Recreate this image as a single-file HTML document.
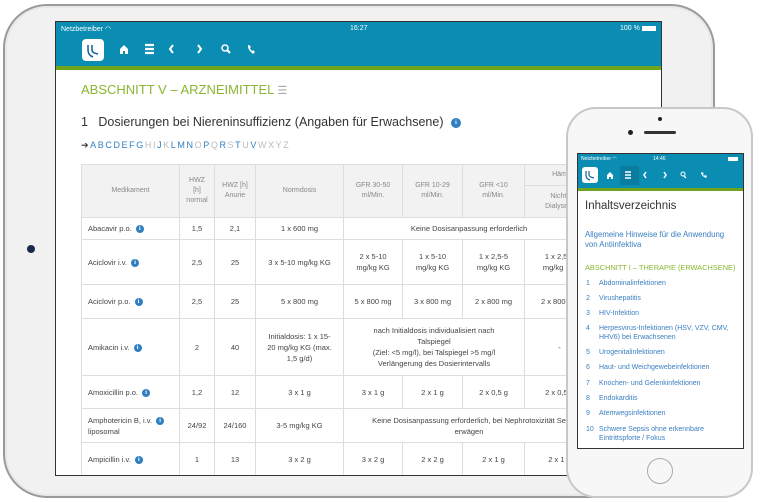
<!DOCTYPE html>
<html><head><meta charset="utf-8"><style>
*{margin:0;padding:0;box-sizing:border-box}
body{width:760px;height:502px;background:#fff;position:relative;overflow:hidden;font-family:"Liberation Sans",sans-serif}
.abs{position:absolute}
.ipad{left:3px;top:4px;width:712px;height:494px;border-radius:44px;background:#f1f1f1;border:2px solid #9a9a9a;box-shadow:inset 0 0 0 2px #e8e8e8}
.scr{left:55px;top:21px;width:607px;height:455px;background:#fff;border:1px solid #333;overflow:hidden}
.bar{left:0;top:0;width:100%;height:44px;background:#0b8db3}
.green{left:0;top:44px;width:100%;height:4px;background:#6fa41c}
.st{color:#fff;font-size:7px}
.logo{background:#fff;border-radius:4px}
table{border-collapse:collapse;font-size:7.5px;color:#444;position:absolute;left:25px;top:142px}
td{border:1px solid #ddd;text-align:center;vertical-align:middle;line-height:11px}
th{border:1px solid #ddd;background:#f2f2f2;font-weight:normal;color:#888;font-size:7px;line-height:10px;vertical-align:middle}
td.l{text-align:left;padding-left:6px}
.i{display:inline-block;width:8px;height:8px;border-radius:50%;background:#2f7fc1;color:#fff;font-size:6px;line-height:8px;text-align:center;font-weight:bold;margin-left:4px;vertical-align:middle;font-family:"Liberation Serif",serif}
.phone{left:566px;top:107px;width:187px;height:391px;border-radius:30px;background:#f7f7f7;border:2px solid #c8c8c8}
.pscr{left:577px;top:153px;width:167px;height:296px;background:#fff;border:1px solid #333;overflow:hidden}
.toc{font-size:7px;color:#3a7fc0;line-height:9px}
.toc div{position:absolute;left:8px;white-space:nowrap}
.toc span{display:inline-block;width:13px;color:#3a7fc0}
</style></head><body>
<div class="abs ipad"></div>
<div class="abs" style="left:27px;top:245px;width:8px;height:8px;border-radius:50%;background:#1a2a4a"></div>
<div class="abs scr">
 <div class="abs bar"></div>
 <div class="abs st" style="left:5px;top:3px">Netzbetreiber ◠</div>
 <div class="abs st" style="left:294px;top:3px">16:27</div>
 <div class="abs st" style="left:564px;top:3px">100 % <span style="display:inline-block;width:14px;height:5px;background:#fff;vertical-align:middle"></span></div>
 <div class="abs logo" style="left:26px;top:17px;width:22px;height:22px"><svg width="22" height="22"><path d="M6 6v5q0 5 5 7M10 6v5q0 3 6 4" stroke="#0b5f98" stroke-width="1.5" fill="none"/></svg></div>
 <svg class="abs" style="left:60px;top:20px" width="150" height="14" fill="#fff" stroke="#fff">
  <path d="M4 7l4-4 4 4v5h-3v-3h-2v3h-3z" stroke="none"/>
  <path d="M29 3h9M29 7h9M29 11h9" stroke-width="2.2" fill="none"/>
  <path d="M57 3l-3 4 3 4" stroke-width="2" fill="none"/>
  <path d="M82 3l3 4-3 4" stroke-width="2" fill="none"/>
  <circle cx="109" cy="6" r="3" fill="none" stroke-width="1.5"/><path d="M111 8l3 3" stroke-width="2"/>
  <path d="M132 3q-1 4 5 9l2-2-2-2-1 1q-2-2-2-3l1-1-2-2z" stroke="none"/>
 </svg>
 <div class="abs green"></div>
 <div class="abs" style="left:25px;top:60px;font-size:13px;color:#8bb532">ABSCHNITT V – ARZNEIMITTEL <span style="color:#aaa;font-size:11px">☰</span></div>
 <div class="abs" style="left:25px;top:93px;font-size:12.5px;color:#333">1&nbsp;&nbsp;&nbsp;Dosierungen bei Niereninsuffizienz (Angaben für Erwachsene) <span class="i" style="width:10px;height:10px;line-height:10px">i</span></div>
 <div class="abs" style="left:25px;top:118px;font-size:9px;color:#2f7fc1;letter-spacing:1.6px"><span style="color:#333">➔</span>ABCDEFG<span style="color:#bbb">HI</span>J<span style="color:#bbb">K</span>LMN<span style="color:#bbb">O</span>P<span style="color:#bbb">Q</span>R<span style="color:#bbb">S</span>T<span style="color:#bbb">U</span>V<span style="color:#bbb">WXYZ</span></div>
 <table>
  <tr style="height:21px"><th rowspan="2" style="width:98px">Medikament</th><th rowspan="2" style="width:35px">HWZ<br>[h]<br>normal</th><th rowspan="2" style="width:41px">HWZ [h]<br>Anurie</th><th rowspan="2" style="width:88px">Normdosis</th><th rowspan="2" style="width:59px">GFR 30-50<br>ml/Min.</th><th rowspan="2" style="width:60px">GFR 10-29<br>ml/Min.</th><th rowspan="2" style="width:62px">GFR &lt;10<br>ml/Min.</th><th style="width:70px">Häm</th></tr>
  <tr style="height:32px"><th>Nicht-<br>Dialyseta</th></tr>
  <tr style="height:22px"><td class="l">Abacavir p.o.<span class="i">i</span></td><td>1,5</td><td>2,1</td><td>1 x 600 mg</td><td colspan="4">Keine Dosisanpassung erforderlich</td></tr>
  <tr style="height:45px"><td class="l">Aciclovir i.v.<span class="i">i</span></td><td>2,5</td><td>25</td><td>3 x 5-10 mg/kg KG</td><td>2 x 5-10<br>mg/kg KG</td><td>1 x 5-10<br>mg/kg KG</td><td>1 x 2,5-5<br>mg/kg KG</td><td>1 x 2,5-5<br>mg/kg KG</td></tr>
  <tr style="height:34px"><td class="l">Aciclovir p.o.<span class="i">i</span></td><td>2,5</td><td>25</td><td>5 x 800 mg</td><td>5 x 800 mg</td><td>3 x 800 mg</td><td>2 x 800 mg</td><td>2 x 800 mg</td></tr>
  <tr style="height:57px"><td class="l">Amikacin i.v.<span class="i">i</span></td><td>2</td><td>40</td><td>Initialdosis: 1 x 15-<br>20 mg/kg KG (max.<br>1,5 g/d)</td><td colspan="3">nach Initialdosis individualisiert nach<br>Talspiegel<br>(Ziel: &lt;5 mg/l), bei Talspiegel &gt;5 mg/l<br>Verlängerung des Dosierintervalls</td><td>-</td></tr>
  <tr style="height:33px"><td class="l">Amoxicillin p.o.<span class="i">i</span></td><td>1,2</td><td>12</td><td>3 x 1 g</td><td>3 x 1 g</td><td>2 x 1 g</td><td>2 x 0,5 g</td><td>2 x 0,5 g</td></tr>
  <tr style="height:34px"><td class="l">Amphotericin B, i.v.<span class="i">i</span><br>liposomal</td><td>24/92</td><td>24/160</td><td>3-5 mg/kg KG</td><td colspan="4">Keine Dosisanpassung erforderlich, bei Nephrotoxizität Se<br>erwägen</td></tr>
  <tr style="height:34px"><td class="l">Ampicillin i.v.<span class="i">i</span></td><td>1</td><td>13</td><td>3 x 2 g</td><td>3 x 2 g</td><td>2 x 2 g</td><td>2 x 1 g</td><td>2 x 1 g</td></tr>
 </table>
</div>
<div class="abs phone"></div>
<div class="abs" style="left:658px;top:117px;width:4px;height:4px;border-radius:50%;background:#222"></div>
<div class="abs" style="left:628px;top:130px;width:5px;height:5px;border-radius:50%;background:#222"></div>
<div class="abs" style="left:644px;top:131px;width:32px;height:3px;border-radius:2px;background:#333"></div>
<div class="abs" style="left:647px;top:458px;width:26px;height:26px;border-radius:50%;border:1px solid #aaa"></div>
<div class="abs pscr">
 <div class="abs" style="left:0;top:0;width:100%;height:34px;background:#0b8db3"></div>
 <div class="abs" style="left:0;top:34px;width:100%;height:3px;background:#6fa41c"></div>
 <div class="abs" style="left:3px;top:2px;color:#fff;font-size:5px">Netzbetreiber ◠</div>
 <div class="abs" style="left:75px;top:2px;color:#fff;font-size:5px">14:46</div>
 <div class="abs" style="left:150px;top:3px;width:10px;height:4px;background:#fff"></div>
 <div class="abs" style="left:4px;top:13px;width:16px;height:16px;background:#fff;border-radius:3px"><svg width="16" height="16"><path d="M4 4v4q0 4 4 5M7 4v4q0 2 5 3" stroke="#0b5f98" stroke-width="1.2" fill="none"/></svg></div>
 <div class="abs" style="left:42px;top:12px;width:19px;height:19px;background:#0a7ca0"></div>
 <svg class="abs" style="left:28px;top:16px" width="120" height="10" fill="#fff" stroke="#fff">
  <path d="M1 5l3-3 3 3v4h-2v-2h-2v2h-2z" stroke="none"/>
  <path d="M19 2h6M19 5h6M19 8h6" stroke-width="1.5"/>
  <path d="M40 2l-2 3 2 3" stroke-width="1.5" fill="none"/>
  <path d="M58 2l2 3-2 3" stroke-width="1.5" fill="none"/>
  <circle cx="77" cy="4" r="2" fill="none"/><path d="M78 6l2 2" stroke-width="1.3"/>
  <path d="M95 2q0 4 5 6l1-2-2-1-1 1q-1-1-1-2l1-1z" stroke="none"/>
 </svg>
 <div class="abs" style="left:7px;top:46px;font-size:11.5px;color:#333">Inhaltsverzeichnis</div>
 <div class="abs" style="left:7px;top:76px;font-size:7.8px;color:#3a7fc0;line-height:10px;white-space:nowrap">Allgemeine Hinweise für die Anwendung<br>von Antiinfektiva</div>
 <div class="abs" style="left:7px;top:109px;font-size:7.4px;color:#8bb532;white-space:nowrap">ABSCHNITT I – THERAPIE (ERWACHSENE)</div>
 <div class="toc">
  <div style="top:125px"><span>1</span>Abdominalinfektionen</div>
  <div style="top:140px"><span>2</span>Virushepatitis</div>
  <div style="top:155px"><span>3</span>HIV-Infektion</div>
  <div style="top:170px"><span>4</span>Herpesvirus-Infektionen (HSV, VZV, CMV,<br><span></span>HHV6) bei Erwachsenen</div>
  <div style="top:194px"><span>5</span>Urogenitalinfektionen</div>
  <div style="top:209px"><span>6</span>Haut- und Weichgewebeinfektionen</div>
  <div style="top:225px"><span>7</span>Knochen- und Gelenkinfektionen</div>
  <div style="top:240px"><span>8</span>Endokarditis</div>
  <div style="top:255px"><span>9</span>Atemwegsinfektionen</div>
  <div style="top:271px"><span>10</span>Schwere Sepsis ohne erkennbare<br><span></span>Eintrittspforte / Fokus</div>
 </div>
</div>
</body></html>
